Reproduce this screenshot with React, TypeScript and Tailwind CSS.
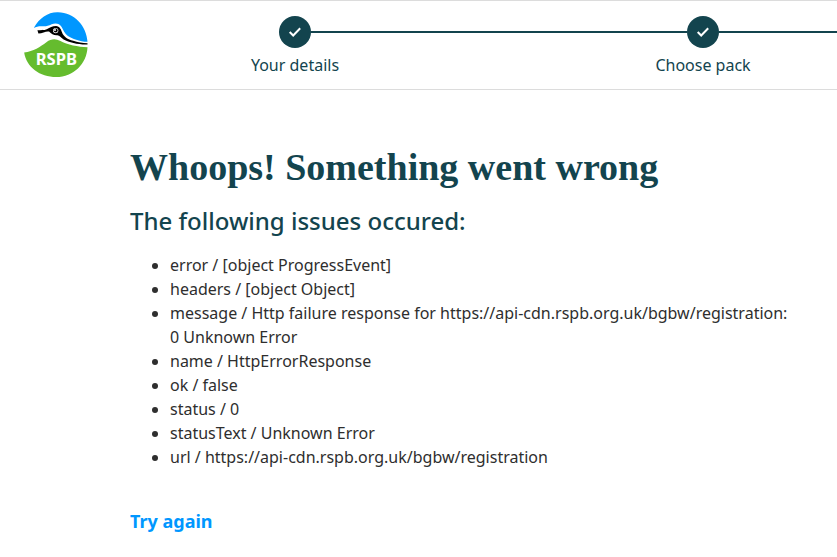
const steps = ['Your details', 'Choose pack'];

const issues = [
  { key: 'error', value: '[object ProgressEvent]' },
  { key: 'headers', value: '[object Object]' },
  {
    key: 'message',
    value: 'Http failure response for https://api-cdn.rspb.org.uk/bgbw/registration: 0 Unknown Error',
  },
  { key: 'name', value: 'HttpErrorResponse' },
  { key: 'ok', value: 'false' },
  { key: 'status', value: '0' },
  { key: 'statusText', value: 'Unknown Error' },
  { key: 'url', value: 'https://api-cdn.rspb.org.uk/bgbw/registration' },
];

function Logo() {
  return (
    <svg viewBox="24 24 192 196" className="h-[65px] w-16 shrink-0" role="img" aria-label="RSPB">
      {/* sky */}
      <path
        d="M53 72C70 42 96 24 126 25C176 26 212 66 215 114C190 112 169 105 156 96C146 89 142 78 137 69C131 59 119 56 107 61C96 66 89 68 80 67C70 66 61 68 53 72Z"
        fill="#0097ff"
      />
      {/* hill */}
      <path
        d="M24 146C52 143 73 128 91 115C105 105 119 104 132 111C155 123 186 130 215 130C213 180 172 220 121 220C71 220 31 190 24 146Z"
        fill="#65bc2e"
      />
      {/* avocet head and bill */}
      <path
        d="M64 79C74 78 84 80 92 76C102 70 109 66 120 66C131 67 135 76 138 85C143 99 155 106 172 111C185 115 200 118 215 118L215 122C188 123 160 116 143 107C134 101 132 95 124 94C114 95 106 90 99 83C89 81 80 89 67 89Z"
        fill="#000"
      />
      <circle cx="119" cy="80" r="8" fill="#fff" />
      <circle cx="119" cy="80" r="6" fill="#000" />
      <circle cx="117" cy="78" r="3" fill="#fff" />
      <text
        x="121"
        y="185"
        textAnchor="middle"
        fontFamily="Noto Sans, sans-serif"
        fontSize="50"
        fontWeight="700"
        fill="#fff"
      >
        RSPB
      </text>
    </svg>
  );
}

function Tick() {
  return (
    <svg viewBox="0 0 16 16" className="h-4 w-4" fill="none" stroke="currentColor" strokeWidth="2" aria-hidden="true">
      <path d="M2.7 8L6.2 11.5L13.2 4.3" />
    </svg>
  );
}

function Step({ label, first }: { label: string; first: boolean }) {
  return (
    <li className="min-w-[408px] flex-1">
      <div className="flex items-center">
        <span className={`h-0.5 flex-1 ${first ? 'bg-transparent' : 'bg-[#13444e]'}`} />
        <span className="flex h-8 w-8 items-center justify-center rounded-full bg-[#13444e] text-white">
          <Tick />
        </span>
        <span className="h-0.5 flex-1 bg-[#13444e]" />
      </div>
      <p className="mt-[5px] text-center text-base leading-6 text-[#13444e]">{label}</p>
    </li>
  );
}

export default function App() {
  return (
    <div className="min-h-screen bg-white font-['Noto_Sans',sans-serif] text-[#2e2e2e]">
      <header className="flex gap-[3px] overflow-hidden border-y border-[#dcdcdc] pl-6">
        <div className="pt-[11px] pb-3">
          <Logo />
        </div>
        <ol className="flex flex-1 pt-[15px]">
          {steps.map((label, i) => (
            <Step key={label} label={label} first={i === 0} />
          ))}
        </ol>
      </header>

      <main className="mr-8 ml-[130px] max-w-[664px] pt-[51px] pb-6">
        <h1 className="font-['Liberation_Serif',serif] text-[38px] leading-[52px] font-bold text-[#13444e]">
          Whoops! Something went wrong
        </h1>
        <h2 className="mt-3 text-2xl leading-8 font-medium text-[#13444e]">The following issues occured:</h2>
        <ul className="mt-4 list-disc pl-10 text-base leading-6">
          {issues.map((issue) => (
            <li key={issue.key}>{`${issue.key} / ${issue.value}`}</li>
          ))}
        </ul>
        <a href="#" className="mt-10 inline-block text-lg leading-6 font-bold text-[#0097ff]">
          Try again
        </a>
      </main>
    </div>
  );
}
